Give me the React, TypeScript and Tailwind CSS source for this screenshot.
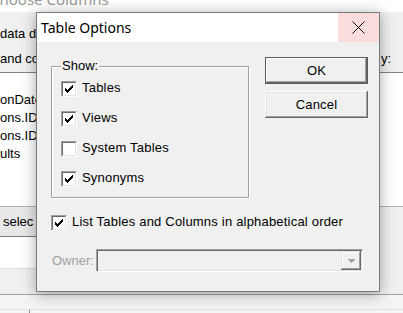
import React from "react";

function Check() {
  return (
    <svg width="8" height="8" viewBox="0 0 8 8" shapeRendering="crispEdges">
      <path
        d="M0 3h1v3h-1z M1 4h1v3h-1z M2 5h1v3h-1z M3 4h1v3h-1z M4 3h1v3h-1z M5 2h1v3h-1z M6 1h1v3h-1z M7 0h1v3h-1z"
        fill="#000"
      />
    </svg>
  );
}

function Box({ checked }: { checked: boolean }) {
  return (
    <span className="flex w-[16px] h-[16px] shrink-0 border border-t-[#a0a0a0] border-l-[#a0a0a0] border-r-white border-b-white">
      <span className="flex flex-1 items-center justify-center bg-white border border-t-[#696969] border-l-[#696969] border-r-[#e3e3e3] border-b-[#e3e3e3]">
        {checked && <Check />}
      </span>
    </span>
  );
}

function CheckRow({ label, checked }: { label: string; checked: boolean }) {
  return (
    <div className="flex h-[16px] items-center gap-[5px]">
      <Box checked={checked} />
      <span className="leading-[16px] relative -top-[1px] whitespace-nowrap">{label}</span>
    </div>
  );
}

export default function App() {
  return (
    <div className="relative w-[403px] h-[313px] overflow-hidden bg-white font-['Liberation_Sans',Arial,sans-serif] text-[13px] text-black">
      {/* window behind */}
      <div className="flex flex-col h-full">
        <div className="h-[12px] overflow-hidden bg-white">
          <div className="-mt-[11px] -ml-[10px] font-['Noto_Sans',sans-serif] text-[15px] leading-[20px] text-[#999] whitespace-nowrap">
            Choose Columns
          </div>
        </div>
        <div className="h-[60px] bg-[#f0f0f0] flex justify-between">
          <div className="w-[36px] overflow-hidden flex flex-col pt-[14px] gap-[9px] leading-[16px] whitespace-nowrap">
            <span>data d</span>
            <span>and co</span>
          </div>
          <div className="w-[23px] overflow-hidden pt-[39px] leading-[16px] whitespace-nowrap">
            <span className="pl-[1px]">y:</span>
          </div>
        </div>
        <div className="h-[1px] bg-[#828282]" />
        <div className="h-[133px] bg-white pt-[18px]">
          <div className="w-[36px] overflow-hidden flex flex-col leading-[18px] whitespace-nowrap">
            <span>onDate</span>
            <span>ons.ID</span>
            <span>ons.ID</span>
            <span>ults</span>
          </div>
        </div>
        <div className="h-[88px] bg-[#f0f0f0] border-t border-[#b4b4b4] flex">
          <div className="w-[36px] overflow-hidden flex flex-col">
            <div className="h-[30px] bg-[#e8e8e8] border-b border-[#7a7a7a] flex items-center leading-[16px] pl-[3px] whitespace-nowrap">
              selec
            </div>
            <div className="h-[32px] bg-white border-b border-[#dcdcdc]" />
          </div>
        </div>
        <div className="h-[1px] bg-[#a0a0a0]" />
        <div className="flex-1 bg-[#f4f4f4] flex items-end">
          <div className="h-[4px] w-full border-t border-[#e0e0e0] flex">
            <div className="w-[30px] border-r border-[#8a8a8a]" />
          </div>
        </div>
      </div>

      {/* dialog */}
      <div className="absolute left-[36px] top-[12px] w-[344px] h-[280px] border border-[#7a7a7a] bg-[#f0f0f0] flex flex-col shadow-[0_2px_14px_rgba(0,0,0,0.35)]">
        <div className="h-[29px] bg-white flex items-center justify-between">
          <span className="pl-[4px] font-['Noto_Sans',sans-serif] text-[14px] leading-[20px]">Table Options</span>
          <div className="w-[41px] h-full bg-[#f9dddd] flex items-center justify-center">
            <svg width="13" height="13" viewBox="0 0 13 13">
              <path d="M0.5 0.5L12.5 12.5M12.5 0.5L0.5 12.5" stroke="#000" strokeWidth="1" />
            </svg>
          </div>
        </div>
        <div className="flex flex-col pl-[14px] tracking-[0.2px]">
          <div className="flex items-start">
            <div className="relative mt-[24px] w-[198px] h-[132px] border border-[#a0a0a0] shadow-[inset_1px_1px_0_#fff,1px_1px_0_#fff] pt-[14px] pl-[9px] flex flex-col gap-[14px]">
              <span className="absolute left-[9px] -top-[9px] px-[1px] bg-[#f0f0f0] leading-[16px] tracking-normal">Show:</span>
              <CheckRow label="Tables" checked />
              <CheckRow label="Views" checked />
              <CheckRow label="System Tables" checked={false} />
              <CheckRow label="Synonyms" checked />
            </div>
            <div className="ml-[16px] mt-[15px] flex flex-col gap-[7px]">
              <button className="w-[103px] h-[27px] bg-[#f0f0f0] border border-[#5a5a5a] shadow-[inset_-1px_-1px_0_#696969,inset_1px_1px_0_#fff,inset_-2px_-2px_0_#a0a0a0] leading-[16px]">
                OK
              </button>
              <button className="w-[103px] h-[27px] bg-[#f0f0f0] shadow-[inset_-1px_-1px_0_#696969,inset_1px_1px_0_#fff,inset_-2px_-2px_0_#a0a0a0,inset_2px_2px_0_#e3e3e3] leading-[16px]">
                Cancel
              </button>
            </div>
          </div>
          <div className="mt-[17px]">
            <CheckRow label="List Tables and Columns in alphabetical order" checked />
          </div>
          <div className="mt-[18px] flex items-center">
            <span className="w-[45px] pl-[1px] text-[#a0a0a0] leading-[16px] tracking-normal">Owner:</span>
            <div className="w-[267px] h-[23px] border border-t-[#a0a0a0] border-l-[#a0a0a0] border-b-white border-r-white shadow-[inset_1px_1px_0_#696969,inset_-1px_-1px_0_#e3e3e3] flex justify-end items-center pr-[1px]">
              <div className="w-[20px] h-[19px] bg-[#f0f0f0] shadow-[inset_-1px_-1px_0_#696969,inset_1px_1px_0_#e3e3e3,inset_-2px_-2px_0_#a0a0a0,inset_2px_2px_0_#fff] flex items-center justify-center">
                <svg width="7" height="4" viewBox="0 0 7 4" shapeRendering="crispEdges">
                  <path d="M0 0h7v1h-1v1h-1v1h-1v1h-1v-1h-1v-1h-1v-1h-1z" fill="#a0a0a0" />
                </svg>
              </div>
            </div>
          </div>
        </div>
      </div>
    </div>
  );
}
